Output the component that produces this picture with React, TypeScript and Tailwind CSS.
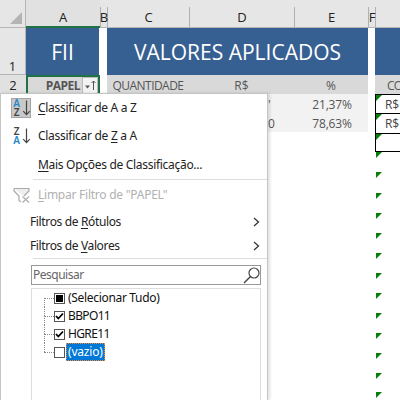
import type { ReactNode } from 'react';

const uiFont = "font-['Noto_Sans','Open_Sans',sans-serif]";

function U({ children }: { children: ReactNode }) {
  return <span className="underline decoration-1 underline-offset-[2px]">{children}</span>;
}

function ColumnHeader({ label, className }: { label: string; className: string }) {
  return (
    <div className={`flex shrink-0 justify-center text-[13px] leading-[21px] text-[#222] ${className}`}>
      <span>{label}</span>
    </div>
  );
}

function HeaderRow() {
  return (
    <div className="flex h-[28px] items-end border-b border-[#b5b5b5] bg-[#e6e6e6] font-['Open_Sans',sans-serif]">
      <div className="flex h-[27px] w-[26px] items-end justify-end border-r border-[#b5b5b5] pr-[3px] pb-[3px]">
        <svg width="12" height="12" viewBox="0 0 12 12"><path d="M12 0V12H0Z" fill="#b4b4b4" /></svg>
      </div>
      <ColumnHeader label="A" className="-mb-px h-[28px] w-[74px] border-b-2 border-[#217346] bg-[#e1e1e1] pt-[7px]" />
      <ColumnHeader label="B" className="h-[20px] w-[8px] border-x border-[#b0b0b0]" />
      <ColumnHeader label="C" className="h-[20px] w-[82px] border-r border-[#b0b0b0]" />
      <ColumnHeader label="D" className="h-[20px] w-[105px] border-r border-[#b0b0b0]" />
      <ColumnHeader label="E" className="h-[20px] w-[74px] border-r border-[#b0b0b0]" />
      <ColumnHeader label="F" className="h-[20px] w-[7px] border-r border-[#b0b0b0]" />
    </div>
  );
}

function ErrorMark() {
  return <svg className="block" width="6" height="6" viewBox="0 0 6 6"><path d="M0 0H6L0 6Z" fill="#078007" /></svg>;
}

function CurrencyCell({ value, className }: { value: string; className: string }) {
  return (
    <div className={`flex w-[25px] border-t border-l border-black bg-white ${className}`}>
      <ErrorMark />
      <span className="pl-[3px] text-[12px] leading-[20px] tracking-[-0.2px] whitespace-nowrap text-[#444]">{value}</span>
    </div>
  );
}

function SortIcon({ top, bottom, first, second, boxed = false }: { top: string; bottom: string; first: string; second: string; boxed?: boolean }) {
  return (
    <div className={`flex h-[20px] w-[20px] items-center border ${boxed ? 'border-[#a5a5a5] bg-[#c9c9c9]' : 'border-transparent'}`}>
      <div className="flex w-[9px] flex-col items-center text-[10px] leading-[9px] font-semibold">
        <span className={first}>{top}</span>
        <span className={second}>{bottom}</span>
      </div>
      <svg width="9" height="18" viewBox="0 0 9 18" fill="none">
        <path d="M5.5 1.5V15.5M2.2 12.2L5.5 15.7L8.8 12.2" stroke="#444" strokeWidth="1.2" />
      </svg>
    </div>
  );
}

function FilterOffIcon() {
  return (
    <svg width="18" height="17" viewBox="0 0 18 17" fill="none">
      <path d="M1 1.5H16V4L11 9M1 1.5V4L6 9V13.5L8 15" fill="#eee" stroke="#aaa" strokeWidth="1.2" />
      <path d="M9.5 9.5L16 15.5M16 9.5L9.5 15.5" stroke="#b0b0b0" strokeWidth="1.3" />
    </svg>
  );
}

function Chevron() {
  return <svg width="7" height="10" viewBox="0 0 7 10" fill="none"><path d="M1 1L5.5 5L1 9" stroke="#333" strokeWidth="1.3" /></svg>;
}

function MenuItem({ icon, className, children }: { icon?: ReactNode; className: string; children: ReactNode }) {
  return (
    <div className={`flex items-center ${className}`}>
      <div className="flex w-[37px] shrink-0 pl-[10px]">{icon}</div>
      <span className="leading-[14px] whitespace-nowrap">{children}</span>
    </div>
  );
}

function Submenu({ children }: { children: ReactNode }) {
  return (
    <div className="flex h-[24px] items-center justify-between pr-[7px] pl-[29px]">
      <span className="leading-[14px] tracking-[-0.36px] whitespace-nowrap">{children}</span>
      <Chevron />
    </div>
  );
}

function TreeItem({ state, label, className, selected = false, edge = '' }: { state: 'mixed' | 'on' | 'off'; label: string; className: string; selected?: boolean; edge?: string }) {
  return (
    <div className="flex h-[18px] items-center pl-[12px]">
      <div className="flex h-[18px] w-[10px] flex-col">
        <div className={`h-[9px] border-dotted border-[#888] ${edge === 'first' ? '' : 'border-l'}`} />
        <div className={`h-[9px] border-t border-dotted border-[#888] ${edge === 'last' ? '' : 'border-l'}`} />
      </div>
      <div className="flex size-[11px] shrink-0 items-center justify-center border border-[#555] bg-white">
        {state === 'mixed' && <div className="size-[7px] bg-black" />}
        {state === 'on' && <svg width="9" height="9" viewBox="0 0 9 9" fill="none"><path d="M1 4L3.3 6.5L8 1.5" stroke="#000" strokeWidth="1.8" /></svg>}
      </div>
      <span className={`ml-[1px] flex h-[18px] items-center border px-[1px] leading-[16px] whitespace-nowrap ${selected ? 'border-dotted border-[#ff8b25] bg-[#0078d7] text-white' : 'border-transparent'} ${className}`}>{label}</span>
    </div>
  );
}

function FilterMenu() {
  return (
    <div className={`absolute top-[93px] left-0 h-[307px] w-[268px] border-t border-r border-l border-[#c4c4c4] bg-white text-[12px] text-[#222] shadow-[2px_0_3px_rgba(0,0,0,0.12)] ${uiFont}`}>
      <MenuItem className="h-[28px] tracking-[-0.3px]" icon={<SortIcon top="A" bottom="Z" first="text-[#2688c7]" second="text-[#444]" boxed />}><U>C</U>lassificar de A a Z</MenuItem>
      <MenuItem className="h-[28px] tracking-[-0.28px]" icon={<SortIcon top="Z" bottom="A" first="text-[#444]" second="text-[#2688c7]" />}>Classificar de <U>Z</U> a A</MenuItem>
      <MenuItem className="h-[29px] tracking-[-0.3px]"><U>M</U>ais Opções de Classificação...</MenuItem>
      <div className="ml-[32px] h-px bg-[#dedede]" />
      <MenuItem className="h-[30px] tracking-[-0.25px] text-[#b1b1b1]" icon={<div className="pl-[2px]"><FilterOffIcon /></div>}><U>L</U>impar Filtro de "PAPEL"</MenuItem>
      <Submenu>Filtros de <U>R</U>ótulos</Submenu>
      <Submenu>Filtros de <U>V</U>alores</Submenu>
      <div className="ml-[32px] h-px bg-[#dedede]" />
      <div className="mt-[6px] ml-[30px] flex h-[20px] w-[230px] items-center justify-between border border-[#999] pl-[1px] text-[#666]">
        <span className="tracking-[-0.5px]">Pesquisar</span>
        <svg width="17" height="17" viewBox="0 0 17 17" fill="none"><circle cx="11" cy="6" r="5" stroke="#444" strokeWidth="1.2" /><path d="M7.5 9.5L1 16" stroke="#444" strokeWidth="1.4" /></svg>
      </div>
      <div className="mt-[3px] ml-[30px] h-[117px] w-[230px] border-x border-t border-[#dedede] text-[#111]">
        <TreeItem state="mixed" label="(Selecionar Tudo)" edge="first" className="tracking-[-0.32px]" />
        <TreeItem state="on" label="BBPO11" className="tracking-[-0.65px]" />
        <TreeItem state="on" label="HGRE11" className="tracking-[-0.65px]" />
        <TreeItem state="off" label="(vazio)" selected edge="last" className="tracking-[-0.2px]" />
      </div>
    </div>
  );
}

const restMarks = [0, 20, 41, 61, 81, 101, 121, 141, 161, 181, 201, 221, 240];

export default function App() {
  return (
    <main className="relative h-[400px] w-[400px] overflow-hidden bg-white font-['Open_Sans',sans-serif]">
      <HeaderRow />
      <div className="flex h-[47px] text-[21px] text-white">
        <div className="flex w-[26px] items-end justify-center border-r border-b border-[#b5b5b5] bg-[#e6e6e6] text-[13px] leading-[15px] text-[#222]">1</div>
        <div className="flex w-[73px] items-center justify-center bg-[#366092] pt-[3px]"><span>FII</span></div>
        <div className="ml-[8px] flex w-[261px] items-center justify-center bg-[#366092] pt-[3px]"><span className="whitespace-nowrap">VALORES APLICADOS</span></div>
        <div className="ml-[7px] w-[25px] bg-[#366092]" />
      </div>
      <div className="flex h-[19px] items-center bg-[#d9d9d9] text-[12px] text-[#555]">
        <div className="flex h-[19px] w-[26px] justify-center bg-[#e1e1e1] text-[13px] leading-[20px] text-[#222]">2</div>
        <div className="flex h-[19px] w-[74px] justify-end border-x-2 border-t-2 border-[#217346]">
          <span className="mr-[2px] leading-[18px] font-bold tracking-[-0.5px]">PAPEL</span>
          <div className="flex h-[17px] w-[16px] items-center justify-center border border-[#bbb] bg-[#f3f3f3]">
            <svg width="13" height="13" viewBox="0 0 13 13" fill="none"><path d="M1 6.5H6L3.5 9.5Z" fill="#555" /><path d="M9.5 11V2M7.5 4L9.5 2L11.5 4" stroke="#555" /></svg>
          </div>
        </div>
        <div className="h-[19px] w-[7px] bg-white" />
        <div className="flex w-[82px] justify-center pt-[2px]"><span className="tracking-[-0.55px]">QUANTIDADE</span></div>
        <div className="flex w-[105px] justify-center pt-[2px]">R$</div>
        <div className="flex w-[74px] justify-center pt-[2px]">%</div>
        <div className="h-[19px] w-[7px] bg-white" />
        <div className="w-[25px] overflow-hidden pt-[2px] pl-[12px] tracking-[-0.8px]">CO</div>
      </div>
      <div className="flex h-[306px] text-[12px] text-[#555]">
        <div className="w-[268px]" />
        <div className="flex w-[100px] flex-col">
          <div className="flex h-[19px] bg-[#f2f2f2] leading-[21px]"><span className="w-[26px]">'</span><span className="w-[74px] pl-[2px] text-center tracking-[-0.2px]">21,37%</span></div>
          <div className="flex h-[19px] bg-[#f2f2f2] leading-[21px]"><span className="w-[26px]">0</span><span className="w-[74px] pl-[2px] text-center tracking-[-0.2px]">78,63%</span></div>
        </div>
        <div className="w-[7px]" />
        <div className="w-[25px]">
          <CurrencyCell value="R$" className="h-[19px]" />
          <CurrencyCell value="R$" className="h-[20px]" />
          <CurrencyCell value="" className="h-[19px] border-b" />
          <svg className="block" width="25" height="248" viewBox="0 0 25 248">
            {restMarks.map((y) => <path key={y} d={`M1 ${y}h6l-6 6Z`} fill="#078007" />)}
          </svg>
        </div>
      </div>
      <FilterMenu />
    </main>
  );
}
